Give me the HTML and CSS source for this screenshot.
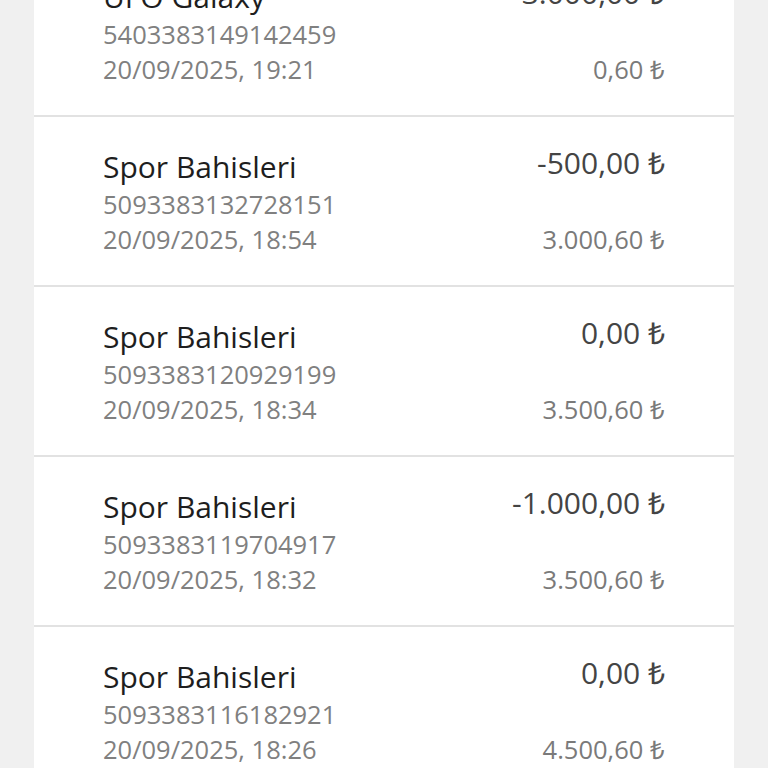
FILE: index.html
```html
<!DOCTYPE html>
<html lang="tr">
<head>
    <meta charset="UTF-8">
    <meta name="viewport" content="width=device-width, initial-scale=1.0">
    <title>Hesap Hareketleri</title>
    <link rel="stylesheet" href="styles.css">
</head>
<body>
    <div class="liste">
        <div class="hareket ilk">
            <div class="sol">
                <div class="baslik">UFO Galaxy</div>
                <div class="alt">5403383149142459</div>
                <div class="alt">20/09/2025, 19:21</div>
            </div>
            <div class="sag">
                <div class="tutar">-3.000,00 ₺</div>
                <div class="bakiye">0,60 ₺</div>
            </div>
        </div>

        <div class="hareket">
            <div class="sol">
                <div class="baslik">Spor Bahisleri</div>
                <div class="alt">5093383132728151</div>
                <div class="alt">20/09/2025, 18:54</div>
            </div>
            <div class="sag">
                <div class="tutar">-500,00 ₺</div>
                <div class="bakiye">3.000,60 ₺</div>
            </div>
        </div>

        <div class="hareket">
            <div class="sol">
                <div class="baslik">Spor Bahisleri</div>
                <div class="alt">5093383120929199</div>
                <div class="alt">20/09/2025, 18:34</div>
            </div>
            <div class="sag">
                <div class="tutar">0,00 ₺</div>
                <div class="bakiye">3.500,60 ₺</div>
            </div>
        </div>

        <div class="hareket">
            <div class="sol">
                <div class="baslik">Spor Bahisleri</div>
                <div class="alt">5093383119704917</div>
                <div class="alt">20/09/2025, 18:32</div>
            </div>
            <div class="sag">
                <div class="tutar">-1.000,00 ₺</div>
                <div class="bakiye">3.500,60 ₺</div>
            </div>
        </div>

        <div class="hareket">
            <div class="sol">
                <div class="baslik">Spor Bahisleri</div>
                <div class="alt">5093383116182921</div>
                <div class="alt">20/09/2025, 18:26</div>
            </div>
            <div class="sag">
                <div class="tutar">0,00 ₺</div>
                <div class="bakiye">4.500,60 ₺</div>
            </div>
        </div>
    </div>
</body>
</html>
```

FILE: styles.css
```css
:root {
    --arka: #f0f0f0;
    --kart: #ffffff;
    --cizgi: #e2e2e2;
    --koyu: #1e1e1e;
    --gri: #808080;
}

body {
    margin: 0;
    background-color: var(--arka);
    font-family: 'Open Sans', sans-serif;
    overflow: hidden;
    height: 768px;
}

/* liste yukaridan kaydirilmis gibi, ilk satir yarim gorunuyor */
.liste {
    margin: -53px 34px 0 34px;
    background-color: var(--kart);
}

.hareket {
    display: flex;
    justify-content: space-between;
    height: 168px;
    padding: 0 69px;
    border-bottom: 2px solid var(--cizgi);
    box-sizing: content-box;
}

.sol, .sag {
    display: flex;
    flex-direction: column;
    padding-top: 30px;
}

.sag {
    align-items: flex-end;
}

.baslik {
    font-size: 30px;
    line-height: 40px;
    color: var(--koyu);
}

.alt {
    font-size: 25.5px;
    line-height: 35px;
    color: var(--gri);
}

.tutar {
    font-size: 30px;
    line-height: 40px;
    color: #444444;
    margin-top: -4px;
}

.bakiye {
    font-size: 25.5px;
    line-height: 35px;
    color: #7a7a7a;
    margin-top: 39px;
}
```
